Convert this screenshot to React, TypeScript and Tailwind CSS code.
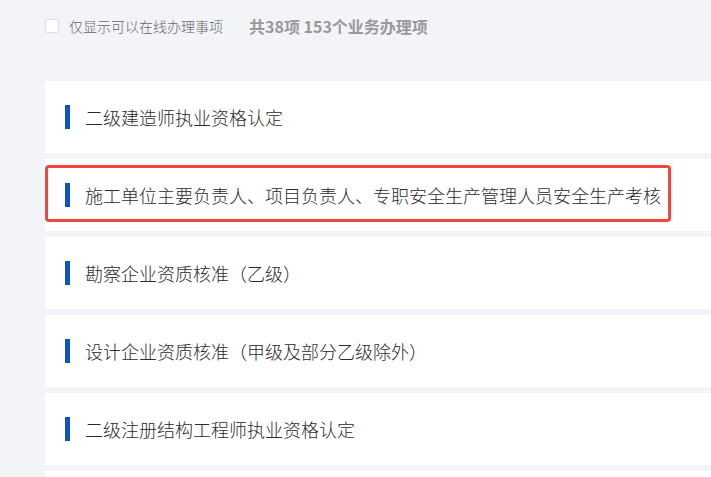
import React from "react";

const items = [
  "二级建造师执业资格认定",
  "施工单位主要负责人、项目负责人、专职安全生产管理人员安全生产考核",
  "勘察企业资质核准（乙级）",
  "设计企业资质核准（甲级及部分乙级除外）",
  "二级注册结构工程师执业资格认定",
  "",
];

export default function App() {
  return (
    <div
      className="h-[477px] w-[711px] overflow-hidden bg-[#f3f4f8] text-[#333]"
      style={{ fontFamily: '"Noto Sans CJK SC", "Noto Sans", sans-serif' }}
    >
      <div className="flex h-[53px] items-center pl-[45px] pb-[1px]">
        <span className="h-[14px] w-[14px] rounded-[2px] border border-[#dcdde6] bg-white" />
        <span className="ml-[10px] text-[14px] font-light leading-none text-[#666]">仅显示可以在线办理事项</span>
        <span className="ml-[26px] text-[16px] font-bold leading-none text-[#999]">共38项 153个业务办理项</span>
      </div>

      <div className="mt-[28px] flex flex-col gap-[6px] pl-[45px]">
        {items.map((title, i) => (
          <div key={i} className="relative flex h-[72px] items-center bg-white pl-[20px]">
            {title && (
              <>
                <span className="h-[24px] w-[5px] bg-[#0e55c2]" />
                <span className="ml-[15px] whitespace-nowrap text-[18px] font-light leading-none text-[#2b2b2b]">
                  {title}
                </span>
              </>
            )}
            {i === 1 && (
              <div className="absolute left-0 top-[6px] h-[57px] w-[626px] rounded-[4px] border-[3px] border-[#ef473b]" />
            )}
          </div>
        ))}
      </div>
    </div>
  );
}
